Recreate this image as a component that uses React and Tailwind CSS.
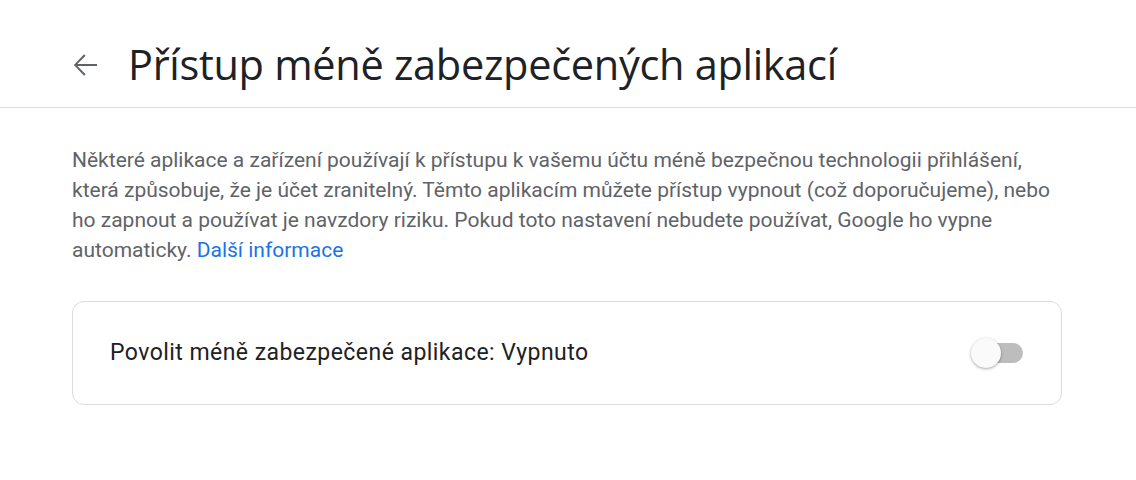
import React from "react";

export default function App() {
	return (
		<div className="bg-white w-[1136px] h-[480px] overflow-hidden font-['Roboto',sans-serif]">
			{/* Header */}
			<div className="flex items-center h-[108px] border-b border-[#dadce0] pl-[67px] pt-[22px]">
				<button className="w-[36px] h-[36px] flex items-center justify-center text-[#5f6368]">
					<svg width="36" height="36" viewBox="0 0 24 24" fill="currentColor">
						<path d="M20 11.3H6.9l5.5-5.5-1-1L4.6 12l6.8 7.2 1-1-5.5-5.5H20z" />
					</svg>
				</button>
				<h1 className="ml-[25px] font-['Open_Sans',sans-serif] text-[41.5px] leading-none text-[#202124] tracking-[-0.3px]">
					Přístup méně zabezpečených aplikací
				</h1>
			</div>

			{/* Content */}
			<div className="px-[72px] pt-[37px]">
				<p className="w-[990px] text-[21px] leading-[30px] text-[#5f6368]">
					Některé aplikace a zařízení používají k přístupu k vašemu účtu méně bezpečnou technologii přihlášení, která způsobuje, že je účet zranitelný. Těmto aplikacím můžete přístup vypnout (což doporučujeme), nebo ho zapnout a používat je navzdory riziku. Pokud toto nastavení nebudete používat, Google ho vypne automaticky.{" "}
					<a className="text-[#1a73e8]" href="#">Další informace</a>
				</p>

				<div className="mt-[36px] w-[990px] h-[104px] border border-[#dadce0] rounded-[12px] flex items-center justify-between pl-[37px] pr-[36px]">
					<span className="text-[23px] tracking-[0.45px] text-[#202124]">
						Povolit méně zabezpečené aplikace: Vypnuto
					</span>
					<div className="relative w-[54px] h-[30px] flex items-center">
						<div className="ml-[14px] w-[38px] h-[20px] rounded-full bg-[#bdbdbd]" />
						<div className="absolute left-0 top-0 w-[30px] h-[30px] rounded-full bg-[#fafafa] shadow-[0_1px_3px_rgba(0,0,0,0.35)]" />
					</div>
				</div>
			</div>
		</div>
	);
}
